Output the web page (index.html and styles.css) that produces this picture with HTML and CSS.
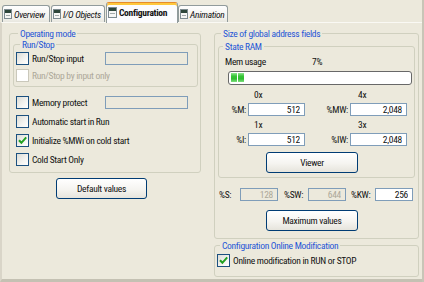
FILE: index.html
```html
<!DOCTYPE html>
<html lang="en">
<head>
    <meta charset="UTF-8">
    <meta name="viewport" content="width=device-width, initial-scale=1.0">
    <title>Configuration</title>
    <link rel="stylesheet" href="styles.css">
</head>
<body>
<div class="window">
    <div class="tabs">
        <div class="tab tabOverview">
            <svg class="ico" width="8" height="10" viewBox="0 0 8 10"><rect x="0.5" y="0.5" width="7" height="9" fill="#f6f6f4" stroke="#7d8b90"/><rect x="1" y="1" width="6" height="3" fill="#2e463a"/><rect x="2" y="6" width="4" height="1" fill="#a4abab"/></svg>
            <span>Overview</span>
        </div>
        <div class="tab tabIo">
            <svg class="ico" width="8" height="10" viewBox="0 0 8 10"><rect x="0.5" y="0.5" width="7" height="9" fill="#f6f6f4" stroke="#7d8b90"/><rect x="1" y="1" width="6" height="3" fill="#2e463a"/><rect x="2" y="6" width="4" height="1" fill="#a4abab"/></svg>
            <span>I/O Objects</span>
        </div>
        <div class="tab active">
            <svg class="ico" width="9" height="11" viewBox="0 0 9 11"><rect x="0.5" y="0.5" width="8" height="10" fill="#f6f6f4" stroke="#7d8b90"/><rect x="1" y="1" width="7" height="3" fill="#2e463a"/><rect x="2" y="6" width="5" height="1" fill="#a4abab"/></svg>
            <span>Configuration</span>
        </div>
        <div class="tab tabAnim">
            <svg class="ico" width="8" height="10" viewBox="0 0 8 10"><rect x="0.5" y="0.5" width="7" height="9" fill="#f6f6f4" stroke="#7d8b90"/><rect x="1" y="1" width="6" height="3" fill="#2e463a"/><rect x="2" y="6" width="4" height="1" fill="#a4abab"/></svg>
            <span>Animation</span>
        </div>
    </div>

    <div class="page">
        <div class="colLeft">
            <fieldset class="opMode">
                <legend>Operating mode</legend>
                <fieldset class="runStop">
                    <legend>Run/Stop</legend>
                    <div class="row">
                        <span class="box"></span>
                        <span class="lbl wide">Run/Stop input</span>
                        <input class="field" type="text" disabled>
                    </div>
                    <div class="row off">
                        <span class="box"></span>
                        <span class="lbl">Run/Stop by input only</span>
                    </div>
                </fieldset>
                <div class="opRows">
                    <div class="row">
                        <span class="box"></span>
                        <span class="lbl wide">Memory protect</span>
                        <input class="field" type="text" disabled>
                    </div>
                    <div class="row">
                        <span class="box"></span>
                        <span class="lbl">Automatic start in Run</span>
                    </div>
                    <div class="row">
                        <span class="box"><svg width="11" height="11" viewBox="0 0 11 11"><path d="M2 5.2l2.4 2.6 4.8-5.4" fill="none" stroke="#21a121" stroke-width="2"/></svg></span>
                        <span class="lbl">Initialize %MWi on cold start</span>
                    </div>
                    <div class="row">
                        <span class="box"></span>
                        <span class="lbl">Cold Start Only</span>
                    </div>
                </div>
            </fieldset>
            <button class="btn btnDefault">Default values</button>
        </div>

        <div class="colRight">
            <fieldset class="sizeGroup">
                <legend>Size of global address fields</legend>
                <fieldset class="stateRam">
                    <legend>State RAM</legend>
                    <div class="memRow">
                        <span class="memLbl">Mem usage</span>
                        <span>7%</span>
                    </div>
                    <div class="bar"><span></span><span></span></div>
                    <div class="addrHead"><span class="hd1">0x</span><span>4x</span></div>
                    <div class="addrRow">
                        <span class="aL">%M:</span>
                        <input class="field num" type="text" value="512">
                        <span class="aR">%MW:</span>
                        <input class="field num" type="text" value="2,048">
                    </div>
                    <div class="addrHead"><span class="hd1">1x</span><span>3x</span></div>
                    <div class="addrRow">
                        <span class="aL">%I:</span>
                        <input class="field num" type="text" value="512">
                        <span class="aR">%IW:</span>
                        <input class="field num" type="text" value="2,048">
                    </div>
                    <button class="btn btnViewer">Viewer</button>
                </fieldset>
                <div class="sysRow">
                    <span class="sL">%S:</span>
                    <input class="field small" type="text" value="128" disabled>
                    <span class="sL2">%SW:</span>
                    <input class="field small" type="text" value="644" disabled>
                    <span class="sL3">%KW:</span>
                    <input class="field small" type="text" value="256">
                </div>
                <button class="btn btnMax">Maximum values</button>
            </fieldset>

            <fieldset class="online">
                <legend>Configuration Online Modification</legend>
                <div class="row">
                    <span class="box"><svg width="11" height="11" viewBox="0 0 11 11"><path d="M2 5.2l2.4 2.6 4.8-5.4" fill="none" stroke="#21a121" stroke-width="2"/></svg></span>
                    <span class="lbl">Online modification in RUN or STOP</span>
                </div>
            </fieldset>
        </div>
    </div>
</div>
</body>
</html>
```

FILE: styles.css
```css
body{
    margin: 0;
    background: #ece9dc;
    font-family: "Roboto Condensed", "Liberation Sans", Arial, sans-serif;
    font-size: 9.5px;
    line-height: 11px;
    letter-spacing: -0.3px;
    color: #111;
}
.window{
    width: 422px;
    height: 282px;
    border-right: 2px solid #c8c5b7;
    display: flex;
    flex-direction: column;
}

/* tabs */
.tabs{
    height: 22px;
    display: flex;
    align-items: flex-end;
    padding-left: 2px;
    position: relative;
    z-index: 1;
}
.tab{
    height: 17px;
    box-sizing: border-box;
    border: 1px solid #919b9c;
    border-bottom: none;
    border-radius: 3px 3px 0 0;
    background: linear-gradient(#fefefe, #f3f2ee 70%, #e8e7df);
    display: flex;
    align-items: center;
    padding: 0 0 0 1px;
    margin-right: 1px;
    font-style: italic;
    white-space: nowrap;
    overflow: hidden;
}
.tab .ico{
    margin-right: 2px;
    flex: none;
}
.tabOverview{
    width: 48px;
}
.tabIo{
    width: 54px;
}
.tabAnim{
    width: 50px;
}
.tab.active{
    width: 72px;
    height: 21px;
    margin-right: 0;
    margin-bottom: -1px;
    padding: 0 0 2px 1px;
    background: #fcfcfe;
    border-top: 1px solid #e68b2c;
    box-shadow: inset 0 2px 0 #ffc83c;
    font-style: normal;
    font-weight: bold;
}

/* page */
.page{
    flex: 1;
    display: flex;
    border-top: 1px solid #faf9f4;
    border-left: 2px solid #d9d5c8;
    border-bottom: 3px solid #c4c1b3;
    padding: 5px 0 0 7px;
}
.colLeft{
    width: 192px;
}
.colRight{
    width: 205px;
    margin-left: 13px;
}

fieldset{
    margin: 0;
    min-width: 0;
    border: 1px solid #d0d0bf;
    border-radius: 3px;
}
legend{
    padding: 0 2px;
    color: #1f56d6;
    line-height: 11px;
}

.opMode{
    padding: 0 2px 3px 3px;
}
.opMode > legend{
    margin-left: 5px;
}
.runStop{
    padding: 0 2px 2px 2px;
}
.runStop > legend{
    margin-left: 4px;
}
.row{
    display: flex;
    align-items: center;
    height: 17px;
}
.opRows{
    margin-top: 6px;
    padding-left: 3px;
}
.opRows .row{
    height: 19px;
}
.box{
    width: 13px;
    height: 13px;
    box-sizing: border-box;
    border: 1px solid #1c5180;
    background: linear-gradient(135deg, #dcdcd6, #f4f4f1 60%, #fff);
    margin-right: 3px;
    flex: none;
}
.box svg{
    display: block;
}
.off .box{
    border-color: #cac8bb;
    background: #fff;
}
.off .lbl{
    color: #aca899;
}
.lbl.wide{
    width: 73px;
}

.field{
    box-sizing: border-box;
    width: 83px;
    height: 13px;
    margin: 0;
    padding: 0 4px;
    border: 1px solid #7f9db9;
    border-radius: 0;
    background: #fff;
    font: inherit;
    letter-spacing: inherit;
    color: #111;
    text-align: right;
    outline: none;
}
.field:disabled{
    background: #ece9dc;
    color: #aca899;
}
.field.num{
    width: 57px;
}
.field.small{
    width: 38px;
}

.btn{
    display: block;
    box-sizing: border-box;
    height: 21px;
    padding: 0;
    border: 1px solid #003c74;
    border-radius: 3px;
    background: linear-gradient(#ffffff, #f5f4f0 55%, #e6e4dc);
    font: inherit;
    letter-spacing: inherit;
    color: #111;
}
.btnDefault{
    width: 91px;
    margin: 5px 0 0 47px;
}

/* right column */
.sizeGroup{
    padding: 0 3px 7px 3px;
}
.sizeGroup > legend{
    margin-left: 3px;
}
.stateRam{
    margin-top: 2px;
    padding: 0 2px 4px 6px;
}
.stateRam > legend{
    margin-left: -2px;
}
.memRow{
    display: flex;
    margin-top: 4px;
}
.memLbl{
    width: 87px;
}
.bar{
    display: flex;
    gap: 1px;
    box-sizing: border-box;
    width: 184px;
    height: 14px;
    margin: 4px 0 0 3px;
    padding: 1px 2px;
    border: 1px solid #686868;
    border-radius: 3px;
    background: #fff;
}
.bar span{
    width: 6px;
    height: 9px;
    background: linear-gradient(#8fe58f, #36c436 35%, #2fbd2f 65%, #7fdf7f);
}
.addrHead{
    display: flex;
    margin-top: 3px;
}
.memRow + .bar + .addrHead{
    margin-top: 4px;
}
.hd1{
    width: 104px;
    margin-left: 29px;
}
.addrRow{
    display: flex;
    align-items: center;
    height: 13px;
    margin-top: 3px;
}
.aL{
    width: 21px;
    margin-right: 2px;
    text-align: right;
}
.aR{
    width: 43px;
    margin-right: 2px;
    text-align: right;
}
.btnViewer{
    width: 92px;
    margin: 6px 0 0 41px;
}
.sysRow{
    display: flex;
    align-items: center;
    height: 13px;
    margin-top: 10px;
}
.sL, .sL2, .sL3{
    box-sizing: border-box;
    margin-right: 2px;
}
.sL{
    width: 20px;
    padding-left: 1px;
}
.sL2{
    width: 28px;
    padding-left: 6px;
}
.sL3{
    width: 27px;
    padding-left: 5px;
}
.btnMax{
    width: 92px;
    margin: 9px 0 0 48px;
}

.online{
    margin-top: 1px;
    padding: 0 2px 9px 2px;
}
.online > legend{
    margin-left: 3px;
}
.online .row{
    height: 13px;
    margin-top: 3px;
}
```
